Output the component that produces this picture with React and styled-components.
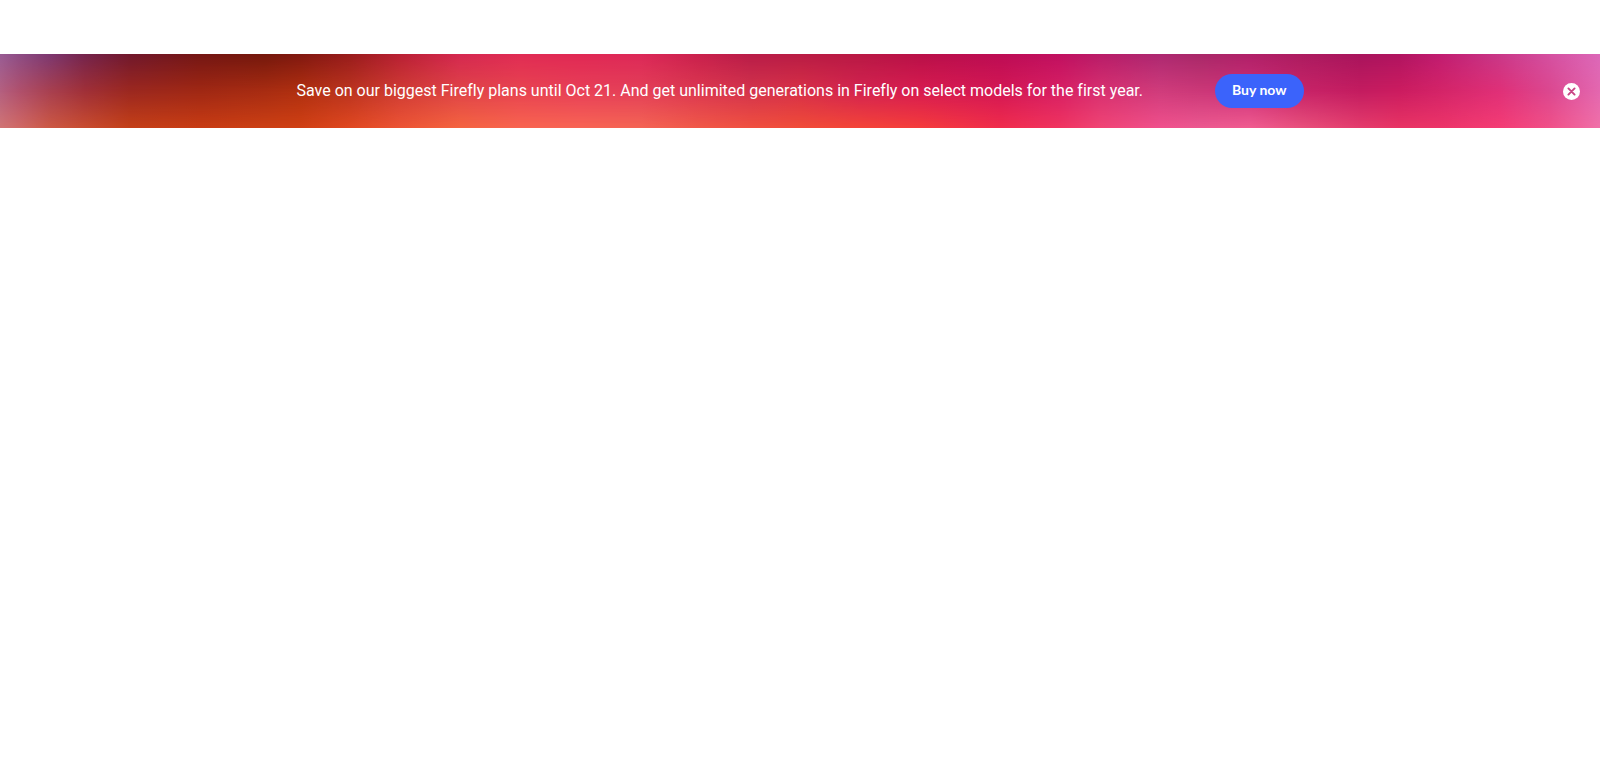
import React, { useState } from "react";
import styled, { createGlobalStyle } from "styled-components";

const GlobalStyle = createGlobalStyle`
  body {
    margin: 0;
    background: #ffffff;
    font-family: "Trebuchet MS", Roboto, sans-serif;
    font-variant-ligatures: none;
  }
`;

// position (px of 1600), top, middle and bottom colour of the backdrop
const mesh = [
  [0, "#985c94", "#b46080", "#d07474"],
  [20, "#8c4c84", "#b0506c", "#d06864"],
  [50, "#7c3870", "#a84050", "#cc5844"],
  [85, "#74244c", "#a03038", "#c84c30"],
  [130, "#70182c", "#9c2820", "#c44018"],
  [200, "#741614", "#a02814", "#c83c14"],
  [265, "#74180c", "#a82c12", "#cc4014"],
  [300, "#801810", "#b03010", "#d04014"],
  [350, "#981c1c", "#bc3420", "#e04820"],
  [400, "#b82034", "#d03c34", "#ec5434"],
  [460, "#d42850", "#e04448", "#f46440"],
  [520, "#e02c54", "#e84450", "#f86450"],
  [580, "#e02854", "#e84058", "#f86454"],
  [640, "#dc2858", "#e44058", "#f46454"],
  [700, "#c8204c", "#dc3850", "#f05848"],
  [750, "#b81c48", "#d4344c", "#f05040"],
  [800, "#b81c44", "#d83048", "#f04c38"],
  [860, "#b81844", "#d42450", "#f44438"],
  [920, "#b81048", "#d81c50", "#f43c3c"],
  [1000, "#bc0c54", "#d41854", "#f02c4c"],
  [1060, "#c01060", "#d82064", "#f03460"],
  [1100, "#b81c68", "#d83070", "#f04474"],
  [1160, "#ac2870", "#d03c7c", "#f0508c"],
  [1200, "#a82868", "#cc3878", "#ec5890"],
  [1250, "#b02068", "#cc3078", "#f05c90"],
  [1300, "#ac1c60", "#c82468", "#e8507c"],
  [1360, "#a8145c", "#c41c60", "#e43c6c"],
  [1400, "#b01460", "#cc1c60", "#e83464"],
  [1440, "#c01c70", "#d42468", "#ec3468"],
  [1500, "#c83888", "#e03078", "#f43c74"],
  [1550, "#d450a0", "#dc4890", "#f05088"],
  [1600, "#dc68b8", "#e468b0", "#f070a8"],
];

const band = (row) =>
  `linear-gradient(90deg, ${mesh
    .map((stop) => `${stop[row]} ${stop[0] / 16}%`)
    .join(", ")})`;

const Page = styled.main`
  padding-top: 54px;
`;

const Banner = styled.section`
  position: relative;
  isolation: isolate;
  display: grid;
  grid-template-columns: 1fr auto 1fr;
  align-items: center;
  min-height: 74px;
  padding: 0 20px;
  box-sizing: border-box;
  background: ${band(2)};
  color: #ffffff;

  &::before,
  &::after {
    content: "";
    position: absolute;
    inset: 0;
    z-index: -1;
  }
  &::before {
    background: ${band(1)};
    mask-image: linear-gradient(#000, transparent 50%);
  }
  &::after {
    background: ${band(3)};
    mask-image: linear-gradient(transparent 50%, #000);
  }
`;

const Offer = styled.div`
  grid-column: 2;
  display: flex;
  align-items: center;
  gap: 72px;
`;

const Message = styled.p`
  margin: 0;
  font-size: 16px;
  line-height: 24px;
`;

const BuyButton = styled.button`
  flex-shrink: 0;
  padding: 5px 17px 7px;
  border: none;
  border-radius: 17px;
  background: #3b63fb;
  color: #ffffff;
  font-family: "Trebuchet MS", Lato, sans-serif;
  font-size: 14px;
  font-weight: 700;
  line-height: 22px;
  cursor: pointer;
  &:hover {
    background: #274dea;
  }
`;

const CloseButton = styled.button`
  justify-self: end;
  display: flex;
  padding: 0;
  border: none;
  border-radius: 50%;
  background: none;
  color: #ffffff;
  cursor: pointer;
`;

const CloseIcon = () => (
  <svg width="17" height="17" viewBox="0 0 17 17" aria-hidden="true">
    <circle cx="8.5" cy="8.5" r="8.5" fill="currentColor" />
    <path
      d="M5.4 5.4l6.2 6.2M11.6 5.4l-6.2 6.2"
      stroke="#c84484"
      strokeWidth="1.9"
      strokeLinecap="round"
    />
  </svg>
);

const App = () => {
  const [open, setOpen] = useState(true);
  return (
    <Page>
      <GlobalStyle />
      {open && (
        <Banner>
          <Offer>
            <Message>
              Save on our biggest Firefly plans until Oct 21. And get unlimited
              generations in Firefly on select models for the first year.
            </Message>
            <BuyButton type="button">Buy now</BuyButton>
          </Offer>
          <CloseButton
            type="button"
            aria-label="Close"
            onClick={() => setOpen(false)}
          >
            <CloseIcon />
          </CloseButton>
        </Banner>
      )}
    </Page>
  );
};
export default App;
